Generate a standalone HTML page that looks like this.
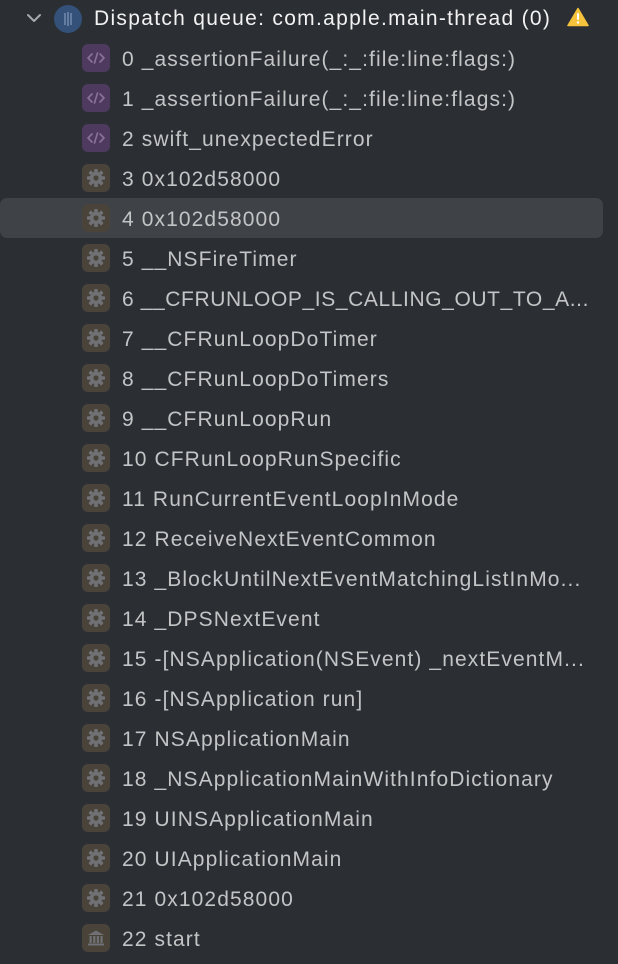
<!DOCTYPE html>
<html><head><meta charset="utf-8"><style>
*{margin:0;padding:0;box-sizing:border-box}
body{width:618px;height:964px;background:#2b2e32;font-family:"Liberation Sans",sans-serif;overflow:hidden;position:relative}
.hdr{position:absolute;top:0;left:0;height:38px;width:618px}
.hdr .chev{position:absolute;left:26px;top:10px}
.hdr .q{position:absolute;left:54px;top:5px;width:28px;height:28px;border-radius:50%;background:#34517a}
.hdr .t{position:absolute;left:94px;top:7px;font-size:21px;color:#f2f2f3;white-space:nowrap;letter-spacing:1.3px}
.hdr .w{position:absolute;left:567px;top:7px}
.row{position:absolute;left:0;height:40px;width:603px}
.row.sel{background:#3f4246;border-radius:7px}
.ic{position:absolute;left:82px;top:6px;width:28px;height:28px;border-radius:6px}
.ic.p{background:#4e3a5e}
.ic.g{background:#4a4339}
.tx{position:absolute;left:122px;top:10px;font-size:21px;color:#c3c4c6;white-space:nowrap;letter-spacing:1.1px}
</style></head><body>
<div class="hdr">
<svg class="chev" width="16" height="16" viewBox="0 0 16 16"><path d="M2 5 L8 11 L14 5" fill="none" stroke="#a8aaad" stroke-width="2" stroke-linecap="round" stroke-linejoin="round"/></svg>
<div class="q"><svg width="28" height="28" viewBox="0 0 28 28"><path d="M11 8v12M14 7v14M17 8v12" stroke="#7f93b4" stroke-width="1.3"/></svg></div>
<div class="t">Dispatch queue: com.apple.main-thread (0)</div>
<svg class="w" width="22" height="20" viewBox="0 0 22 20"><path d="M11 1.5 L21 18.5 H1 Z" fill="#f5c33b" stroke="#f5c33b" stroke-width="1.5" stroke-linejoin="round"/><rect x="10" y="6" width="2" height="7" rx="1" fill="#fff"/><circle cx="11" cy="15.5" r="1.2" fill="#fff"/></svg>
</div>
<div id="rows"></div>
<script>
var items=[["p","0 _assertionFailure(_:_:file:line:flags:)"],["p","1 _assertionFailure(_:_:file:line:flags:)"],["p","2 swift_unexpectedError"],["g","3 0x102d58000"],["g","4 0x102d58000"],["g","5 __NSFireTimer"],["g","6 __CFRUNLOOP_IS_CALLING_OUT_TO_A..."],["g","7 __CFRunLoopDoTimer"],["g","8 __CFRunLoopDoTimers"],["g","9 __CFRunLoopRun"],["g","10 CFRunLoopRunSpecific"],["g","11 RunCurrentEventLoopInMode"],["g","12 ReceiveNextEventCommon"],["g","13 _BlockUntilNextEventMatchingListInMo..."],["g","14 _DPSNextEvent"],["g","15 -[NSApplication(NSEvent) _nextEventM..."],["g","16 -[NSApplication run]"],["g","17 NSApplicationMain"],["g","18 _NSApplicationMainWithInfoDictionary"],["g","19 UINSApplicationMain"],["g","20 UIApplicationMain"],["g","21 0x102d58000"],["b","22 start"]];
var code='<svg width="28" height="28" viewBox="0 0 28 28"><path d="M10 10 L6 14 L10 18 M18 10 L22 14 L18 18 M15.5 9 L12.5 19" fill="none" stroke="#8a7399" stroke-width="1.6" stroke-linecap="round" stroke-linejoin="round"/></svg>';
var gear='<svg width="28" height="28" viewBox="0 0 28 28"><g fill="#6f7175" transform="translate(14 14)"><circle r="6.2"/>'+[0,45,90,135,180,225,270,315].map(function(a){return '<rect x="-1.8" y="-9" width="3.6" height="4" rx="0.8" transform="rotate('+a+')"/>'}).join('')+'<circle r="2.6" fill="#4a4339"/></g></svg>';
var bank='<svg width="28" height="28" viewBox="0 0 28 28"><g fill="#6f7175"><path d="M6 11 L14 6.5 L22 11 Z"/><rect x="7.5" y="12" width="2.2" height="7"/><rect x="11.2" y="12" width="2.2" height="7"/><rect x="14.8" y="12" width="2.2" height="7"/><rect x="18.4" y="12" width="2.2" height="7"/><rect x="6" y="19.5" width="16" height="2"/></g></svg>';
var h='';
items.forEach(function(it,i){
var top=38+i*40;
var cls=it[0]=='p'?'p':'g';
var svg=it[0]=='p'?code:(it[0]=='g'?gear:bank);
h+='<div class="row'+(i==4?' sel':'')+'" style="top:'+(i==4?198:top)+'px"><div class="ic '+cls+'">'+svg+'</div><div class="tx"'+(i==6?' style="letter-spacing:0.6px"':'')+'>'+it[1]+'</div></div>';
});
document.getElementById('rows').innerHTML=h;
</script>
</body></html>
